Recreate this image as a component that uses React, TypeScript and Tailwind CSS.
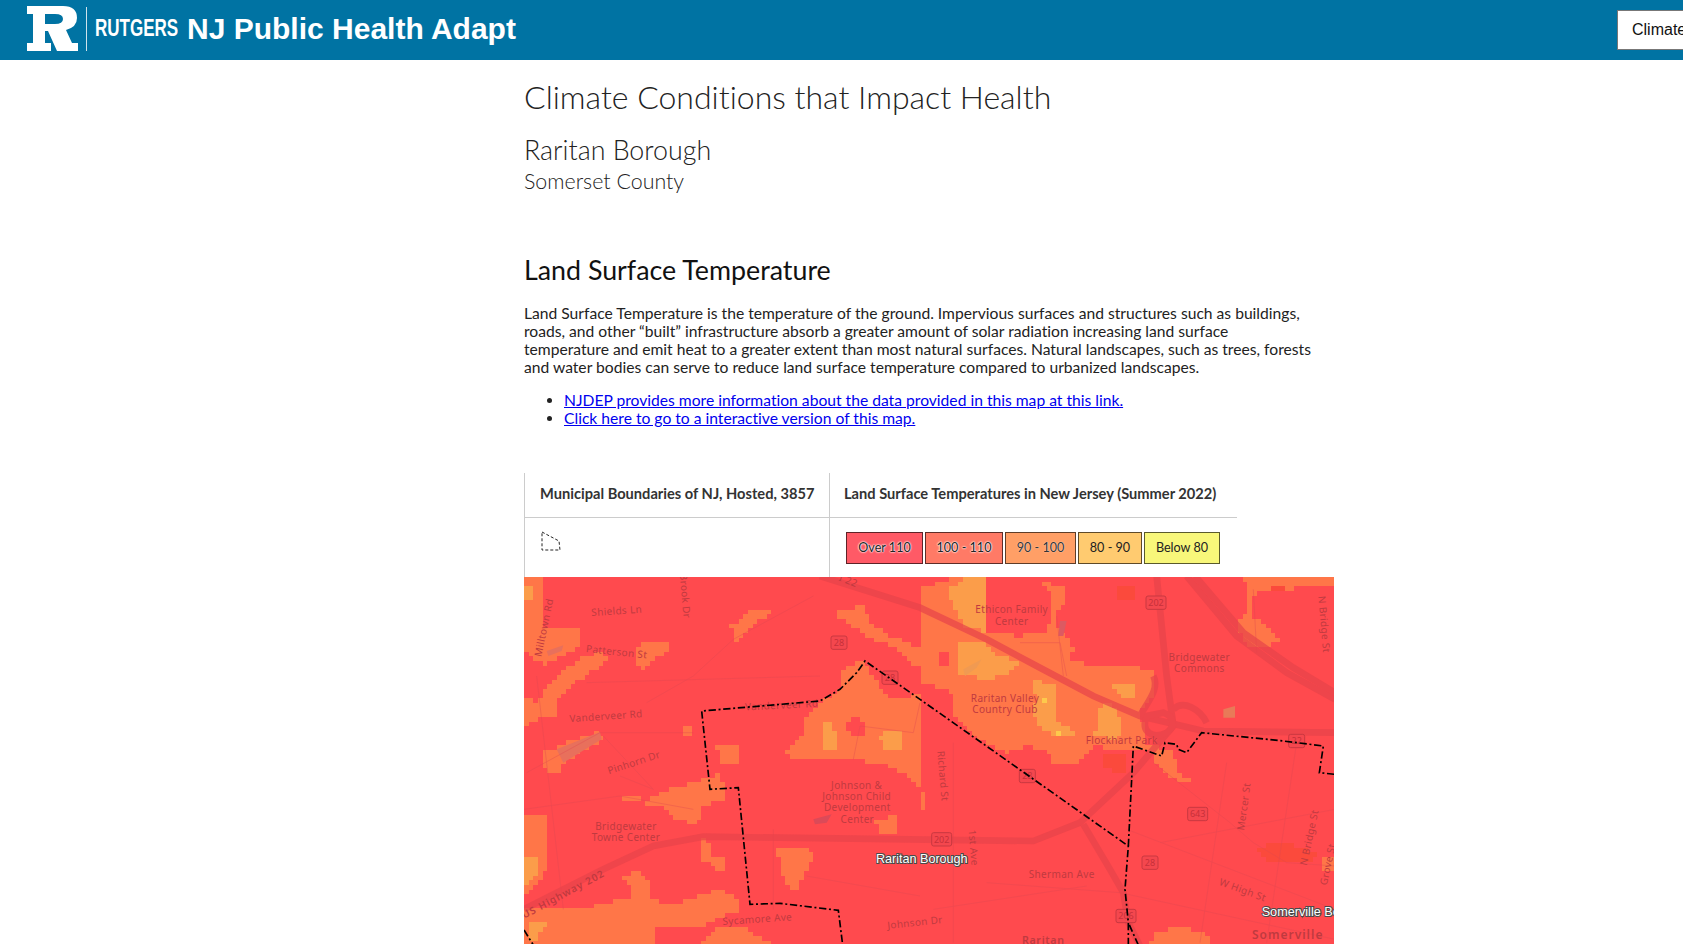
import React, { useMemo } from "react";

type Poly = number[];
const off = (p: Poly): Poly => p.map((v, i) => (i % 2 === 0 ? v + 1200 : v));

const ORANGE: Poly[] = [
  [12, 10, 75, 10, 75, 150, 180, 155, 185, 205, 130, 240, 70, 265, 40, 250, 12, 210],
  [250, 225, 262, 255, 180, 310, 110, 380, 110, 420, 50, 430, 20, 450, 12, 450, 12, 360, 50, 380, 90, 320, 150, 270, 200, 240],
  [375, 195, 445, 195, 440, 225, 385, 265, 365, 280, 348, 260, 350, 225],
  [690, 100, 755, 95, 755, 115, 710, 130, 680, 170, 640, 200, 635, 150],
  [930, 110, 1000, 100, 1020, 70, 1060, 150, 1110, 180, 1200, 215, 1200, 280, 1130, 220, 1060, 190],
  [960, 280, 1030, 255, 1060, 300, 1110, 370, 1170, 360, 1200, 350, 1200, 630, 1160, 600, 1100, 570, 1000, 550, 850, 550, 785, 535, 850, 480, 850, 430, 900, 380, 960, 340],
  [365, 680, 440, 640, 540, 615, 600, 590, 610, 640, 620, 670, 550, 690, 530, 745, 470, 730, 430, 690],
  [590, 505, 660, 515, 660, 565, 600, 560],
  [770, 815, 870, 815, 880, 850, 830, 950, 790, 910],
  [312, 905, 345, 880, 390, 920, 390, 965, 450, 990, 600, 940, 660, 970, 660, 1000, 530, 1060, 400, 1060, 400, 1107, 12, 1107, 12, 1000, 200, 995, 340, 960, 330, 930],
  [540, 1107, 600, 1050, 680, 1060, 760, 1107],
  [12, 710, 75, 720, 80, 880, 30, 950, 12, 950],
  [550, 790, 575, 800, 580, 850, 620, 850, 620, 885, 590, 880, 550, 850],
  [1065, 730, 1130, 720, 1130, 770, 1085, 775],
  [60, 530, 240, 465, 250, 490, 130, 560, 125, 590, 65, 580],
  [310, 662, 365, 662, 365, 677, 312, 677],
  [488, 455, 510, 455, 510, 480, 488, 480],
  off([0, 40, 90, 10, 360, 10, 440, 40, 440, 70, 400, 110, 420, 165, 460, 210, 450, 250, 520, 270, 640, 265, 700, 290, 700, 360, 660, 400, 680, 500, 760, 530, 780, 590, 820, 620, 790, 625, 730, 590, 680, 520, 600, 520, 520, 510, 470, 560, 400, 570, 390, 530, 330, 510, 260, 530, 210, 510, 150, 470, 100, 420, 100, 350, 0, 320]),
  off([970, 10, 1242, 10, 1242, 35, 1040, 40, 1000, 60, 995, 120, 1040, 150, 1080, 190, 1040, 220, 990, 220, 960, 170, 960, 130, 985, 110, 985, 50]),
  off([710, 1070, 790, 1050, 850, 1070, 880, 1107, 690, 1107]),
  off([0, 650, 14, 650, 14, 700, 0, 700]),
  off([1200, 850, 1242, 850, 1242, 880, 1210, 880]),
];

const RED: Poly[] = [
  [985, 435, 1010, 415, 1030, 440, 1030, 470, 1005, 490, 985, 470],
  off([200, 10, 360, 10, 395, 60, 395, 110, 380, 170, 300, 180, 230, 170, 200, 170, 190, 130, 200, 100]),
  off([65, 230, 90, 230, 90, 265, 65, 265]),
  off([460, 390, 490, 390, 490, 402, 460, 402]),
];

const AMBER: Poly[] = [
  [12, 25, 40, 25, 40, 80, 12, 80],
  [905, 440, 930, 440, 955, 490, 955, 515, 905, 515],
  [1080, 480, 1105, 465, 1140, 465, 1140, 520, 1095, 520],
  [12, 840, 50, 850, 50, 900, 12, 940],
  [30, 1040, 90, 1030, 50, 1090, 30, 1100],
  off([90, 40, 130, 10, 200, 10, 200, 165, 130, 160, 115, 110, 90, 70]),
  off([115, 205, 180, 195, 220, 230, 300, 260, 260, 300, 190, 310, 115, 290]),
  off([330, 310, 410, 330, 410, 430, 470, 480, 380, 470, 330, 410, 350, 370]),
  off([540, 390, 570, 380, 610, 440, 590, 490, 520, 480, 540, 440]),
  off([575, 320, 640, 320, 650, 360, 600, 365]),
];

const YELLOW: Poly[] = [off([372, 364, 386, 364, 386, 378, 372, 378]), off([414, 462, 428, 462, 428, 476, 414, 476])];

const DARK: Poly[] = [
  off([585, 25, 640, 25, 640, 70, 585, 70]),
  off([545, 535, 620, 530, 620, 590, 540, 580]),
  off([1010, 815, 1080, 800, 1140, 810, 1200, 840, 1140, 862, 1040, 850]),
  off([1055, 30, 1100, 30, 1100, 50, 1055, 50]),
];

const inside = (px: number, py: number, p: Poly) => {
  let c = false;
  const n = p.length / 2;
  for (let i = 0, j = n - 1; i < n; j = i++) {
    const xi = p[i * 2], yi = p[i * 2 + 1], xj = p[j * 2], yj = p[j * 2 + 1];
    if (yi > py !== yj > py && px < ((xj - xi) * (py - yi)) / (yj - yi) + xi) c = !c;
  }
  return c;
};

const CELL = 14;
const raster = (polys: Poly[]) => {
  let d = "";
  for (let y = 3; y < 1110; y += CELL) {
    for (let x = 12; x < 2445; x += CELL) {
      if (polys.some((p) => inside(x + CELL / 2, y + CELL / 2, p))) d += `M${x} ${y}h${CELL}v${CELL}h-${CELL}z`;
    }
  }
  return d;
};

const ROADS = [
  "M900 0 L1200 95 L1400 190 L1550 270 L1720 360 L1860 420 L2050 465 L2445 470",
  "M12 1000 L250 880 L400 810 L550 782 L1540 795 L1680 740 L1840 590 L1960 450 L1940 300 L1910 0",
  "M2000 0 L2150 180 L2300 290 L2445 370",
  "M2025 0 L2170 170 L2320 275 L2445 350",
  "M1690 745 L1770 880 L1810 950 L1825 1040 L1860 1110",
  "M1880 420 C1860 470 1900 490 1940 470 C1970 450 1960 420 1930 410 Z",
  "M1960 400 C1990 370 2040 400 2060 440",
  "M1900 300 C1920 340 1880 380 1860 420",
];

const STREETS = [
  "M12 700 L300 660 L520 700",
  "M20 590 L240 470 L520 470",
  "M380 380 L520 300 L640 190 L880 60",
  "M50 300 L130 1000",
  "M200 320 L900 300",
  "M250 480 L400 640 L300 600",
  "M1000 550 L1020 450 L1180 470 L1200 380",
  "M1500 200 L1620 200 L1640 300",
  "M1610 120 L1630 300",
  "M1900 560 L2130 740 L2200 800 L2300 860 L2445 870",
  "M1820 760 L2445 1000",
  "M1920 800 L2445 700",
  "M2040 1100 L2120 560",
  "M2240 1100 L2330 500",
  "M1300 500 L1300 1100",
  "M1400 920 L1800 950 L2445 1090",
  "M1240 1000 L1700 930",
  "M2200 40 L2210 230",
  "M760 760 L760 1000",
  "M860 900 L1200 960",
];

const LABELS: [string, number, number, number?][] = [
  ["Shields Ln", 290, 115, -4],
  ["Brook Dr", 495, 70, 85],
  ["Milltown Rd", 72, 165, -78],
  ["Patterson St", 290, 238, 6],
  ["Vanderveer Rd", 258, 431, -4],
  ["Vanderveer Rd", 785, 398, -3],
  ["Pinhorn Dr", 342, 570, -18],
  ["Bridgewater", 318, 761],
  ["Towne Center", 318, 795],
  ["Sycamore Ave", 712, 1040, -4],
  ["Johnson &", 1010, 638],
  ["Johnson Child", 1010, 672],
  ["Development", 1012, 706],
  ["Center", 1012, 740],
  ["I 22", 985, 24, 22],
  ["Johnson Dr", 1185, 1050, -6],
  ["Ethicon Family", 1475, 112],
  ["Center", 1475, 146],
  ["Bridgewater", 2038, 255],
  ["Commons", 2038, 289],
  ["Raritan Valley", 1455, 378],
  ["Country Club", 1455, 412],
  ["Flockhart Park", 1805, 503],
  ["Richard St", 1268, 610, 85],
  ["1st Ave", 1360, 825, 85],
  ["Sherman Ave", 1625, 907],
  ["Mercer St", 2172, 702, -82],
  ["N Bridge St", 2412, 155, 85],
  ["N Bridge St", 2368, 795, -78],
  ["Grove St", 2424, 875, -78],
  ["W High St", 2168, 952, 20],
];

const SHIELDS: [string, number, number][] = [
  ["28", 957, 200],
  ["28", 1110, 305],
  ["28", 1522, 600],
  ["202", 1908, 80],
  ["202", 1265, 790],
  ["22", 2330, 495],
  ["643", 2033, 714],
  ["28", 1890, 860],
  ["206", 1818, 1020],
];

function MapArt() {
  const layers = useMemo(
    () => ({ o: raster(ORANGE), r: raster(RED), a: raster(AMBER), y: raster(YELLOW), d: raster(DARK) }),
    []
  );
  return (
    <svg viewBox="12 3 2430 1104" width="810" height="368" className="block">
      <rect x="0" y="0" width="2500" height="1200" fill="#ff4a4e" />
      <path d={layers.o} fill="#ff7648" shapeRendering="crispEdges" />
      <path d={layers.a} fill="#fb9d4a" shapeRendering="crispEdges" />
      <path d={layers.r} fill="#ff4a4e" shapeRendering="crispEdges" />
      <path d={layers.y} fill="#fdc94c" shapeRendering="crispEdges" />
      <path d={layers.d} fill="#fb4a3c" shapeRendering="crispEdges" />
      <path d="M110 520 L240 468 L245 490 L130 560Z" fill="#e8705c" />
      <path d="M80 225 L130 208 L125 225 L85 240Z" fill="#e8705c" />
      <path d="M880 730 L935 715 L920 740 L885 745Z" fill="#dc4a58" />
      <path d="M1620 135 L1640 135 L1630 180 L1615 180Z" fill="#dc5a62" />
      <path d="M1330 280 L1385 250 L1370 275 L1335 300Z" fill="#f09a52" />
      <path d="M2110 400 L2145 390 L2145 425 L2110 425Z" fill="#e87a58" />
      <g fill="none" stroke="#e04852" strokeWidth="2" opacity="0.55">
        {STREETS.map((d) => (
          <path key={d} d={d} />
        ))}
      </g>
      <g fill="none" stroke="#e8434a" strokeWidth="20" opacity="0.7">
        {ROADS.map((d) => (
          <path key={d} d={d} />
        ))}
      </g>
      <g fontFamily="'Noto Sans', sans-serif" fontSize="30" fill="#bf3a40" textAnchor="middle" letterSpacing="1">
        {LABELS.map(([t, x, y, r], i) => (
          <text key={i} x={x} y={y} transform={r ? `rotate(${r} ${x} ${y - 10})` : undefined}>
            {t}
          </text>
        ))}
        <text x="130" y="965" fontSize="30" fontWeight="600" letterSpacing="3" transform="rotate(-28 130 955)">
          US Highway 202
        </text>
        <text x="1570" y="1105" fontSize="32" fontWeight="600" letterSpacing="2">
          Raritan
        </text>
        <text x="2303" y="1090" fontSize="36" fontWeight="600" letterSpacing="3">
          Somerville
        </text>
      </g>
      {SHIELDS.map(([t, x, y], i) => {
        const w = t.length === 3 ? 60 : 48;
        return (
          <g key={i}>
            <rect x={x - w / 2} y={y - 20} width={w} height="40" rx="6" fill="#f4474e" stroke="#c93840" strokeWidth="3" />
            <text x={x} y={y + 10} textAnchor="middle" fontFamily="'Noto Sans', sans-serif" fontSize="27" fill="#c7303a">
              {t}
            </text>
          </g>
        );
      })}
      <g fill="none" stroke="#000" strokeWidth="5" strokeDasharray="22 8 6 8">
        <path d="M12 1062 L40 1107" />
        <path d="M1825 1107 L1825 1040 L1815 940 L1825 810 L1200 370 L1035 255 L1010 290 L960 340 L900 375 L545 405 L570 640 L655 635 L690 985 L780 982 L955 1003 L968 1107" />
        <path d="M1855 1107 L1825 1040" />
        <path d="M1825 810 L1840 510 L1925 540 L1935 500 L1970 505 L1975 520 L2000 530 L2045 470 L2290 495 L2410 510 L2398 590 L2445 595" />
      </g>
      <g
        fontFamily="'Liberation Sans', sans-serif"
        fontSize="38"
        fill="#fff"
        stroke="#4a4a4a"
        strokeWidth="6"
        paintOrder="stroke"
      >
        <text x="1068" y="860" textLength="275">Raritan Borough</text>
        <text x="2225" y="1020">Somerville Borough</text>
      </g>
    </svg>
  );
}

function Logo() {
  return (
    <svg width="52" height="46" viewBox="0 0 52 46" className="mb-[2px] shrink-0">
      <path
        fillRule="evenodd"
        fill="#fff"
        d="M0 0H36Q50 0 50 12Q50 21 39 24L45 37H51V45H30L21 25H18V37H24V45H0V37H6V8H0ZM18 8V18H28Q36 18 36 13Q36 8 28 8Z"
      />
    </svg>
  );
}

const legend = [
  ["Over 110", "bg-[#ff5a66]", "border-[#5e2328]", "w-[77px]", "text-[#222] [text-shadow:0_0_1px_#fff,0_0_2px_#fff,0_0_2px_#fff]"],
  ["100 - 110", "bg-[#ff7a66]", "border-[#5e2d28]", "w-[78px]", "text-[#222] [text-shadow:0_0_1px_#fff,0_0_2px_#fff,0_0_2px_#fff]"],
  ["90 - 100", "bg-[#ff9f66]", "border-[#5e3d28]", "w-[71px]", "text-[#333] [text-shadow:0_0_1px_#fff]"],
  ["80 - 90", "bg-[#ffcb70]", "border-[#5e4a28]", "w-[64px]", "text-[#222]"],
  ["Below 80", "bg-[#f8f77a]", "border-[#5a5a2c]", "w-[76px]", "text-[#222]"],
];

export default function App() {
  return (
    <div className="h-[944px] w-[1683px] overflow-hidden bg-white text-[#222] [font-family:Lato,sans-serif] [font-variant-ligatures:none]">
      <header className="flex h-[60px] items-center bg-[#0073a3] pl-[27px]">
        <Logo />
        <div className="mb-[2px] ml-[7px] h-[44px] w-px bg-[#cfe3ec]" />
        <span className="mb-1 ml-2 block w-[83px] shrink-0 origin-left scale-x-[0.74] text-[23px] font-bold text-white [font-family:'Liberation_Sans',sans-serif]">
          RUTGERS
        </span>
        <span className="mb-1 ml-[9px] text-[30px] font-bold whitespace-nowrap text-white [font-family:'Liberation_Sans',sans-serif]">
          NJ Public Health Adapt
        </span>
        <div className="-mr-1 ml-auto flex h-10 w-[70px] shrink-0 items-center overflow-hidden border border-[#777] bg-white pl-[14px] text-base whitespace-nowrap text-[#111] [font-family:'Liberation_Sans',sans-serif]">
          Climate Conditions
        </div>
      </header>

      <main className="ml-[524px] w-[810px]">
        <h1 className="mt-[17px] text-[32px] leading-[40px] font-light text-[#222]">
          Climate Conditions that Impact Health
        </h1>
        <h2 className="mt-[17px] text-[26.8px] leading-[32px] font-light text-[#222]">Raritan Borough</h2>
        <h3 className="mt-[2px] text-[21.4px] leading-[26px] font-light text-[#222]">Somerset County</h3>
        <h2 className="mt-[60px] text-[26.8px] leading-[32px] text-[#111]">Land Surface Temperature</h2>
        <p className="mt-[18px] text-[15.65px] leading-[18px] whitespace-nowrap text-[#222]">
          Land Surface Temperature is the temperature of the ground. Impervious surfaces and structures such as buildings,
          <br />
          roads, and other “built” infrastructure absorb a greater amount of solar radiation increasing land surface
          <br />
          temperature and emit heat to a greater extent than most natural surfaces. Natural landscapes, such as trees, forests
          <br />
          and water bodies can serve to reduce land surface temperature compared to urbanized landscapes.
        </p>
        <ul className="mt-[15px] list-disc pl-10 text-[15.65px] leading-[18px]">
          <li>
            <a className="text-[#0000ee] underline" href="#a">
              NJDEP provides more information about the data provided in this map at this link.
            </a>
          </li>
          <li>
            <a className="text-[#0000ee] underline" href="#b">
              Click here to go to a interactive version of this map.
            </a>
          </li>
        </ul>

        <div className="mt-[46px] w-[713px] text-[#333]">
          <div className="flex h-[45px] border-b border-[#ccc]">
            <div className="flex w-[306px] items-center border-x border-[#ccc] pb-[3px] pl-[15px] text-[14.65px] font-bold whitespace-nowrap">
              Municipal Boundaries of NJ, Hosted, 3857
            </div>
            <div className="flex flex-1 items-center pb-[3px] pl-[14px] text-[14.65px] font-bold whitespace-nowrap">
              Land Surface Temperatures in New Jersey (Summer 2022)
            </div>
          </div>
          <div className="flex h-[59px]">
            <div className="w-[306px] border-x border-[#ccc] pt-[13px] pl-[15px]">
              <svg width="22" height="20" viewBox="0 0 22 20">
                <path d="M2 1 L19 10 L20 19 L2 19 Z" fill="none" stroke="#222" strokeDasharray="3 2" />
              </svg>
            </div>
            <div className="flex flex-1 items-start gap-[2px] pt-[14px] pl-4">
              {legend.map(([t, bg, bd, w, tx]) => (
                <div
                  key={t}
                  className={`flex h-8 items-center justify-center border pt-px text-[12.6px] ${bg} ${bd} ${w} ${tx}`}
                >
                  {t}
                </div>
              ))}
            </div>
          </div>
        </div>
        <MapArt />
      </main>
    </div>
  );
}
